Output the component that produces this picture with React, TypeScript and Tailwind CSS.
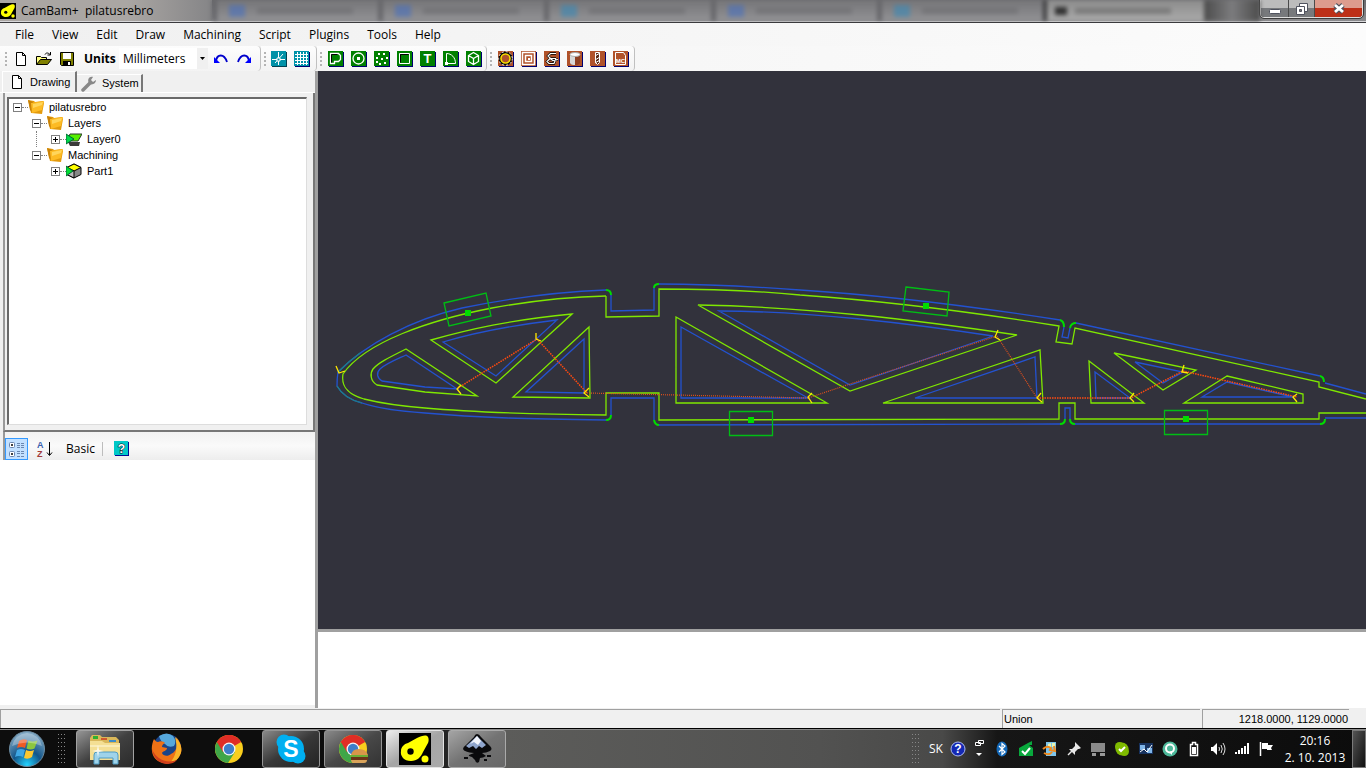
import React from "react";

type Kids = { children?: React.ReactNode };

const Grip = () => (
  <svg width="3" height="16" viewBox="0 0 3 16" className="shrink-0" aria-hidden="true">
    {[0, 4, 8, 12].map((y) => (
      <rect key={y} x="0" y={y + 1} width="2" height="2" fill="#b4b4b4" />
    ))}
  </svg>
);

function ToolButton({ label, children }: Kids & { label: string }) {
  return (
    <button type="button" aria-label={label} className="flex h-6 w-[23px] shrink-0 items-center justify-center">
      <svg width="16" height="16" viewBox="0 0 16 16">
        {children}
      </svg>
    </button>
  );
}

const Tile = ({ fill, edge, children }: Kids & { fill: string; edge: string }) => (
  <>
    <rect x="1" y="1" width="15" height="15" fill={edge} />
    <rect x="0" y="0" width="15" height="15" fill={fill} />
    {children}
  </>
);

const CamBamMark = () => (
  <>
    <rect width="32" height="32" fill="#000" />
    <path d="M28 3c2 1 2 5 1 7l-5 9c-2 5-6 9-12 9-7 0-11-5-10-10 0-4 3-7 7-8l9-5c4-2 8-3 10-2z" fill="#ff0" />
    <circle cx="11.500" cy="18.500" r="3.200" fill="#000" />
    <circle cx="26" cy="26" r="3.500" fill="#ff0" />
  </>
);

const PageShape = () => (
  <path d="M3.500 1.500h6l3 3v10h-9zM9.500 1.500v3h3" fill="#fff" stroke="#000" />
);

function TitleBar() {
  return (
    <header className="flex h-[23px] shrink-0 items-start overflow-hidden border-b border-[#3a3a3d] bg-linear-to-b from-[#6a6a6d] to-[#8d8d90] shadow-[inset_0_-1px_0_#d8d8da]">
      <div className="flex h-[21px] w-[212px] shrink-0 items-center bg-linear-to-r from-[#aaa6a3] from-60% to-[#858587]">
        <svg width="16" height="16" viewBox="0 0 32 32" className="mr-[5px] shrink-0">
          <CamBamMark />
        </svg>
        <h1 className="font-['Open_Sans','Noto_Sans',sans-serif] text-[12px] leading-[20px] whitespace-pre text-black">
          CamBam+  pilatusrebro
        </h1>
      </div>
      <div className="flex h-[21px] flex-1 overflow-hidden blur-[2px]" aria-hidden="true">
        {["#4a70bc", "#4a70bc", "#3a88b5", "#4a70bc", "#3a88b5"].map((c, i) => (
          <div key={i} className="flex min-w-0 flex-1 items-center gap-3 border-l-[5px] border-[#66666a] bg-linear-to-b from-[#757578] to-[#929295] pl-3">
            <span className="h-3 w-4 opacity-60" style={{ backgroundColor: c }} />
            <span className="h-[6px] w-24 bg-[#66666a] opacity-50" />
          </div>
        ))}
        <div className="flex min-w-0 flex-1 items-center gap-2 border-l-4 border-[#3c3c3e] bg-linear-to-b from-[#8c8c8c] to-[#aaaaaa] pl-2">
          <span className="h-2 w-3 bg-[#333]" />
          <span className="h-[6px] w-24 bg-[#666] opacity-60" />
        </div>
        <div className="w-14 bg-linear-to-r from-[#4c4c4c] via-[#7c7c7e] to-[#4c4c4c]" />
      </div>
      <div className="mr-[3px] flex h-[18px] shrink-0 overflow-hidden rounded-b-[4px] border border-t-0 border-[#dedede] bg-[#333] outline-1 outline-[#3c3c3c]">
        <button type="button" aria-label="Minimize" className="flex w-[28px] items-center justify-center border-r border-[#4a4a4a] bg-linear-to-b from-[#bcbcbc] from-50% to-[#77797c] to-50%">
          <svg width="12" height="12" viewBox="0 0 12 12"><rect x="0.500" y="6.500" width="11" height="4" rx="1" fill="#fff" stroke="#50535f" /></svg>
        </button>
        <button type="button" aria-label="Restore" className="flex w-[26px] items-center justify-center border-r border-[#4a4a4a] bg-linear-to-b from-[#bcbcbc] from-50% to-[#77797c] to-50%">
          <svg width="12" height="12" viewBox="0 0 12 12" stroke="#50535f" fill="#fff"><path d="M3.500.5h8v8h-8z" /><path d="M.5 3.500h8v8h-8z" /><path d="M3.500 6.500h2v2h-2z" fill="#777" /></svg>
        </button>
        <button type="button" aria-label="Close" className="flex w-[47px] items-center justify-center bg-linear-to-b from-[#dd9c8e] from-50% to-[#bd3018] to-50%">
          <svg width="12" height="11" viewBox="0 0 12 11"><path d="M2 2l8 7M10 2l-8 7" stroke="#50535f" strokeWidth="5" /><path d="M2 2l8 7M10 2l-8 7" stroke="#fff" strokeWidth="2.800" /></svg>
        </button>
      </div>
    </header>
  );
}

function MenuBar() {
  return (
    <nav className="flex h-[23px] shrink-0 items-center bg-linear-to-r from-[#f0f0f0] to-[#fcfcfc] pl-[6px] font-['Open_Sans','Noto_Sans',sans-serif] text-[12px] text-black">
      {["File", "View", "Edit", "Draw", "Machining", "Script", "Plugins", "Tools", "Help"].map((m) => (
        <button key={m} type="button" className="px-[9px] leading-5">
          {m}
        </button>
      ))}
    </nav>
  );
}

const GREEN = "#008000";
const RUST = "#b0522a";

const Group = ({ children, className = "" }: Kids & { className?: string }) => (
  <div className={`flex h-[25px] shrink-0 items-center rounded-r-sm border-r border-[#c0c0c0] bg-linear-to-b from-[#fdfdfd] to-[#f3f3f3] ${className}`}>
    {children}
  </div>
);

function ToolBar() {
  return (
    <div className="flex h-[25px] shrink-0 items-center bg-linear-to-r from-[#f2f2f2] to-[#fcfcfc]">
      <Group className="w-[261px] pl-[5px]">
        <Grip />
        <span className="w-[1px]" />
        <ToolButton label="New"><PageShape /></ToolButton>
        <ToolButton label="Open">
          <path d="M.5 13.500v-8h4l1 1h5v2" fill="#ffff80" stroke="#000" />
          <path d="M.5 13.500l4-5h11l-4 5z" fill="#808000" stroke="#000" />
          <path d="M9 3.500c1-2 3-2 5 0M14.500 1v3h-3" fill="none" stroke="#000" />
        </ToolButton>
        <ToolButton label="Save">
          <path d="M1.500 1.500h13v13h-12l-1-1z" fill="#808000" stroke="#000" />
          <path d="M4 2h8v6H4z" fill="#fff" /><path d="M4 10h8v5H4z" fill="#000" /><path d="M9 11h2v3H9z" fill="#fff" />
        </ToolButton>
        <label htmlFor="units" className="ml-[6px] w-[35px] font-['Open_Sans','Noto_Sans',sans-serif] text-[12px] font-bold whitespace-nowrap">
          Units
        </label>
        <span className="relative flex h-[21px] w-[89px] shrink-0 items-center bg-white">
          <select id="units" className="h-full w-full appearance-none bg-transparent pl-1 font-['Open_Sans','Noto_Sans',sans-serif] text-[12px] text-black">
            <option>Millimeters</option>
            <option>Inches</option>
          </select>
          <span className="pointer-events-none absolute top-0 right-0 flex h-full w-[11px] items-center justify-center bg-[#f0f0f0]">
            <svg width="5" height="3" viewBox="0 0 5 3"><path d="M0 0h5L2.500 3z" /></svg>
          </span>
        </span>
        <span className="w-[1px]" />
        <ToolButton label="Undo">
          <path d="M3 10C4 3 11 2 14 11" fill="none" stroke="#00c" strokeWidth="1.800" /><path d="M1 6v6h6z" fill="#00f" />
        </ToolButton>
        <ToolButton label="Redo">
          <path d="M13 10C12 3 5 2 2 11" fill="none" stroke="#00c" strokeWidth="1.800" /><path d="M15 6v6H9z" fill="#00f" />
        </ToolButton>
      </Group>
      <Group className="w-[56px] pl-[3px]">
        <Grip />
        <ToolButton label="Snap to points">
          <Tile fill="#0092a8" edge="#004050">
            <path d="M7.500 1v13M1 8.500h13M4 12l8-9" stroke="#fff" fill="none" />
            <path d="M6 7h3v3H6z" fill="#0092a8" stroke="#fff" />
          </Tile>
        </ToolButton>
        <ToolButton label="Snap to grid">
          <Tile fill="#0092a8" edge="#000070">
            <path d="M3.500 1v13M6.500 1v13M9.500 1v13M12.500 1v13M1 3.500h13M1 6.500h13M1 9.500h13M1 12.500h13" stroke="#fff" />
          </Tile>
        </ToolButton>
      </Group>
      <Group className="w-[170px] pl-[3px]">
        <Grip />
        <span className="w-[1px]" />
        <ToolButton label="Polyline">
          <Tile fill={GREEN} edge="#000070">
            <path d="M2.500 12.500v-10h8l2 2v4l-2 2h-4v2z" stroke="#fff" strokeWidth="1.300" fill="none" />
            <path d="M3.500 11.500v-8h6" stroke="#000" fill="none" />
          </Tile>
        </ToolButton>
        <ToolButton label="Circle">
          <Tile fill={GREEN} edge="#000070"><circle cx="7.500" cy="7.500" r="5.500" stroke="#fff" fill="none" strokeWidth="1.300" /><rect x="6" y="6" width="3" height="3" fill="#fff" /></Tile>
        </ToolButton>
        <ToolButton label="Point list">
          <Tile fill={GREEN} edge="#000070">
            {[[4, 2], [9, 2], [12, 6], [2, 6], [7, 7], [2, 10], [5, 12], [10, 11]].map(([x, y]) => (
              <rect key={`${x}-${y}`} x={x} y={y} width="2" height="2" fill="#fff" />
            ))}
          </Tile>
        </ToolButton>
        <ToolButton label="Rectangle">
          <Tile fill={GREEN} edge="#000070"><path d="M2.500 2.500h10v10h-10z" stroke="#fff" fill="none" /><path d="M3.500 11.500v-8h8" stroke="#000" fill="none" /></Tile>
        </ToolButton>
        <ToolButton label="Text">
          <Tile fill={GREEN} edge="#000070">
            <text x="7.500" y="12" textAnchor="middle" fontFamily="Liberation Sans, sans-serif" fontWeight="bold" fontSize="13" fill="#fff">T</text>
          </Tile>
        </ToolButton>
        <ToolButton label="Arc">
          <Tile fill={GREEN} edge="#000070"><path d="M3.500 12.500v-10c5 0 9 4 9 10z" stroke="#fff" fill="none" /><path d="M2 11h3v3H2z" fill="#fff" /></Tile>
        </ToolButton>
        <ToolButton label="Surface">
          <Tile fill={GREEN} edge="#000070"><path d="M7.500 1.500l5 3v6l-5 3-5-3v-6zM2.500 4.500l5 3 5-3M7.500 7.500v6" stroke="#fff" fill="none" strokeWidth="1.300" /></Tile>
        </ToolButton>
      </Group>
      <Group className="w-[148px] pl-[3px]">
        <Grip />
        <span className="w-[1px]" />
        <ToolButton label="Profile">
          <Tile fill={RUST} edge="#000070">
            <circle cx="7.500" cy="7.500" r="5.500" stroke="#000" strokeWidth="3" fill="none" />
            <circle cx="7.500" cy="7.500" r="6.800" stroke="#fff" strokeDasharray="2 2" fill="none" />
            <circle cx="7.500" cy="7.500" r="4.500" stroke="#ffe000" fill="none" strokeWidth="1.600" />
          </Tile>
        </ToolButton>
        <ToolButton label="Pocket">
          <Tile fill={RUST} edge="#000070"><path d="M1.500 1.500h12v12h-12zM4.500 4.500h6v6h-6z" stroke="#fff" strokeWidth="1.500" fill="none" /><path d="M7 7h2v2H7z" fill="#fff" /></Tile>
        </ToolButton>
        <ToolButton label="Engrave">
          <Tile fill={RUST} edge="#000070"><path d="M12 2.500H6.500L4 5l2.500 2.500H12M12 7.500l-2 5H5l-2-2 3-3 3 2 5-1" stroke="#000" strokeWidth="2.400" fill="none" /><path d="M12 2.500H6.500L4 5l2.500 2.500H12M12 7.500l-2 5H5l-2-2 3-3 3 2 5-1" stroke="#fff" strokeWidth="1.200" fill="none" /></Tile>
        </ToolButton>
        <ToolButton label="3D profile">
          <Tile fill={RUST} edge="#000070"><path d="M3 4v8c1 3 8 3 10 0V4z" fill="#8f4022" /><path d="M3 4v8c1 2 3 2 5 2V4z" fill="#d8d8d8" /><ellipse cx="8" cy="3.500" rx="5" ry="2" fill="#fff" stroke="#aaa" /></Tile>
        </ToolButton>
        <ToolButton label="Drill">
          <Tile fill={RUST} edge="#000070"><path d="M5.500 1.500h4v10l-2 2-2-2z" fill="#5a2b17" stroke="#fff" /><path d="M5 5l5-3M5 9l5-3M5 12l5-3" stroke="#fff" /></Tile>
        </ToolButton>
        <ToolButton label="Machine code">
          <Tile fill={RUST} edge="#000070">
            <path d="M2.500 1.500h8l2 3v9h-10z" fill="none" stroke="#fff" />
            <text x="7.500" y="12" textAnchor="middle" fontFamily="Liberation Sans, sans-serif" fontWeight="bold" fontSize="6" fill="#fff">MC</text>
          </Tile>
        </ToolButton>
      </Group>
    </div>
  );
}

const Folder = () => (
  <>
    <path d="M0 1l6 1 1 1 8-1 1 2-2 11-11-1z" fill="#e39a0c" />
    <path d="M0 1l5 2v11l-3-3z" fill="#c98206" />
    <path d="M3 4l13-2-2 9-10 3z" fill="#fdbb24" />
    <path d="M5 5l10-2-1 3-9 3z" fill="#ffd65c" />
  </>
);
const LayerShape = () => (
  <>
    <path d="M2 11h12l-1 4H4z" fill="#3a3a3a" />
    <path d="M1 10l3-7h12l-4 7z" fill="#55f000" stroke="#2a3a2a" />
    <path d="M0 3l8 5-8 5z" fill="#00d848" stroke="#063" />
  </>
);
const PartShape = () => (
  <>
    <path d="M8 1l7 3.500v7L8 15l-7-3.500v-7z" fill="#888" stroke="#000" />
    <path d="M8 1l7 3.500L8 8 1 4.500z" fill="#ff0" stroke="#000" />
    <path d="M8 8v7l-7-3.500v-7z" fill="#bbb" stroke="#000" />
    <path d="M0 3l7 5-7 5z" fill="#0d3" stroke="#063" />
  </>
);

function TreeRow({ text, open, icon, depth }: { text: string; open: boolean; icon: React.ReactNode; depth: string }) {
  return (
    <div className={`flex h-4 items-center ${depth}`}>
      <button type="button" aria-label={`Toggle ${text}`} className="h-[9px] w-[9px] shrink-0">
        <svg width="9" height="9" viewBox="0 0 9 9">
          <rect x=".5" y=".5" width="8" height="8" fill="#fff" stroke="#808080" />
          <path d={open ? "M2 4.500h5" : "M2 4.500h5M4.500 2v5"} stroke="#000" />
        </svg>
      </button>
      <span className="w-[6px] border-b border-dotted border-[#808080]" />
      <svg width="16" height="16" viewBox="0 0 16 16" className="mr-[5px] shrink-0">{icon}</svg>
      <span>{text}</span>
    </div>
  );
}

function LeftPanel() {
  return (
    <aside className="flex w-[315px] shrink-0 flex-col bg-[#f0f0f0] font-['Liberation_Sans',Arial,sans-serif] text-[11px] text-black">
      <div className="flex h-[22px] shrink-0 items-end border-b border-white pl-[2px]" role="tablist">
        <button role="tab" aria-selected="true" type="button" className="flex h-[21px] w-[75px] items-center border-t border-r-2 border-l border-t-white border-r-[#777] border-l-white pl-[6px]">
          <svg width="16" height="16" viewBox="0 0 16 16" className="mr-[5px] shrink-0"><PageShape /></svg>
          Drawing
        </button>
        <button role="tab" aria-selected="false" type="button" className="flex h-[18px] w-[66px] items-center border-t border-r-2 border-t-white border-r-[#777] pl-1">
          <svg width="16" height="16" viewBox="0 0 16 16" className="mr-[5px] shrink-0">
            <path d="M2 14l7-7" stroke="#888" strokeWidth="3.500" strokeLinecap="round" />
            <path d="M15 4l-3 2-2-2 2-3C8 0 6 4 8 7s7 1 7-3z" fill="#888" />
          </svg>
          System
        </button>
      </div>
      <div className="flex h-[339px] shrink-0 flex-col pl-[3px]">
        <div className="flex flex-1 flex-col border-r-2 border-b-2 border-l-2 border-r-[#777] border-b-[#777] border-l-[#999] pt-1 pr-[6px] pb-[5px] pl-[2px]">
          <div className="flex-1 border-t-2 border-r border-b border-l-2 border-t-[#696969] border-r-[#ddd] border-b-[#ddd] border-l-[#696969] bg-white">
            <TreeRow depth="pl-[4px]" text="pilatusrebro" open icon={<Folder />} />
            <TreeRow depth="pl-[23px]" text="Layers" open icon={<Folder />} />
            <TreeRow depth="ml-[27px] border-l border-dotted border-[#808080] pl-[14px]" text="Layer0" open={false} icon={<LayerShape />} />
            <TreeRow depth="pl-[23px]" text="Machining" open icon={<Folder />} />
            <TreeRow depth="pl-[42px]" text="Part1" open={false} icon={<PartShape />} />
          </div>
        </div>
      </div>
      <div className="flex h-7 shrink-0 pl-[3px]">
        <div className="flex flex-1 items-center border-l-2 border-[#999] bg-linear-to-b from-[#f2f2f2] via-[#fafafa] to-[#ededed] pt-[5px]">
          <button type="button" aria-label="Categorized" className="flex h-[22px] w-[23px] items-center justify-center border border-[#3399ff] bg-[#c2e0ff]">
            <svg width="18" height="18" viewBox="0 0 18 18" stroke="#6b87b0" fill="none">
              <rect x="1.500" y="2.500" width="5" height="5" rx="1" fill="#fff" /><rect x="1.500" y="11.500" width="5" height="5" rx="1" fill="#fff" />
              <path d="M3 5h2M4 4v2M3 14h2M4 13v2" stroke="#000" />
              <path d="M9 3.500h3M13 3.500h3M9 5.500h3M13 5.500h3M9 7.500h3M13 7.500h3M9 11.500h3M13 11.500h3M9 13.500h3M13 13.500h3M9 16.500h3M13 16.500h3" />
            </svg>
          </button>
          <button type="button" aria-label="Alphabetical" className="ml-2 flex h-[22px] w-[18px] items-center">
            <svg width="18" height="18" viewBox="0 0 18 18">
              <text x="1" y="8" fontFamily="Liberation Sans, sans-serif" fontWeight="bold" fontSize="9" fill="#3a5fae">A</text>
              <text x="1" y="17" fontFamily="Liberation Sans, sans-serif" fontWeight="bold" fontSize="9" fill="#a03a3a">Z</text>
              <path d="M13.500 2v13M11 12.500l2.500 3 2.500-3" stroke="#000" fill="none" />
            </svg>
          </button>
          <button type="button" className="ml-3 font-['Open_Sans','Noto_Sans',sans-serif] text-[12px]">Basic</button>
          <span className="ml-[7px] h-[14px] w-px bg-[#bdbdbd]" />
          <button type="button" aria-label="Help" className="ml-[11px]">
            <svg width="15" height="15" viewBox="0 0 16 16">
              <Tile fill="#00c8c8" edge="#000090">
                <text x="8" y="13" textAnchor="middle" fontFamily="Liberation Sans, sans-serif" fontWeight="bold" fontSize="13" fill="#fff" stroke="#000" paintOrder="stroke">?</text>
              </Tile>
            </svg>
          </button>
        </div>
      </div>
      <div className="mb-1 flex-1 bg-white" />
    </aside>
  );
}

const profile = [
  "M606 296V317L659 316V289C710 289 760 291 800 295C870 300 960 310 1059 326L1056 342L1072 344L1075 328L1319 382V387L1366 399",
  "M606 296C560 297 525 302 492 308C430 320 365 342 343 374C341 386 347 394 364 399C380 403 400 406 425 408C470 412 520 414 606 415V393H659V420L1059 419V403H1075V419H1319V413H1366",
];
const pockets = [
  "M406 349L477 396L425 392L377 385C370 381 370 373 373 369C378 363 388 358 406 349Z",
  "M431 340C470 329 510 320 572 314L496 383Z",
  "M589 327L590 398L513 397Z",
  "M676 317L827 403H676Z",
  "M698 305C760 306 810 310 860 315Q930 322 1017 335L850 391Z",
  "M883 403L1040 350L1043 403Z",
  "M1089 361L1144 403H1091Z",
  "M1114 353L1196 370L1163 390Z",
  "M1227 376L1303 394V403H1184Z",
];
const toolpaths = [
  "M606 290C555 292 510 298 462 308C410 320 365 345 338 372C337 378 337 381 337 386C342 395 350 400 362 403C380 409 400 411 425 413C480 418 530 419 606 420",
  "M611 295V311L654 310V288M659 284C720 284 760 287 800 290C880 295 970 306 1060 320M1064 327L1062 337L1068 338L1070 328M1076 323L1320 376M1325 383L1366 394",
  "M611 415V398H654V420M659 425L1060 424M1065 419V408H1070V419M1075 424H1320M1325 418H1366",
  "M406 355L457 389L425 387L382 381C377 378 376 373 380 369C385 364 395 360 406 355Z",
  "M443 342Q490 328 557 320L496 376Z",
  "M584 339V393L526 392Z",
  "M681 327L808 398H681Z",
  "M719 311C770 311 820 315 860 319Q920 325 993 336L850 385Z",
  "M915 398L1035 357L1037 398Z",
  "M1095 372L1130 398H1096Z",
  "M1135 362L1183 372L1163 383Z",
  "M1227 382L1293 397H1202Z",
];

function Viewport() {
  return (
    <div className="min-h-0 flex-1 overflow-hidden bg-[#32323c]">
      <svg viewBox="318 71 1048 558" preserveAspectRatio="xMinYMin slice" className="block h-full w-full" fill="none" role="img" aria-label="Wing rib drawing">
        <g stroke="#2352d0" strokeWidth="1.300">{toolpaths.map((d) => <path key={d} d={d} />)}</g>
        <path d="M337 386C342 395 350 400 362 403M338 372C345 365 352 359 360 353" stroke="#1c7f86" strokeWidth="1.200" />
        <g stroke="#7fe800" strokeWidth="1.300">
          {profile.map((d) => <path key={d} d={d} />)}
          {pockets.map((d) => <path key={d} d={d} />)}
        </g>
        <path
          d="M458 388L537 339L587 393M1037 398H1131L1183 371L1297 397"
          stroke="#ff4a10" strokeWidth="1.500" strokeDasharray="1.500 1"
        />
        <path d="M587 393L808 398L850 384L997 336L1037 398" stroke="#e0501c" strokeWidth="1.200" strokeDasharray="1 1" />
        <path
          d="M606 290Q611 290 611 295M654 288Q654 284 659 284M606 420Q611 420 611 415M654 420Q655 425 659 425M1060 320Q1064 321 1064 327M1070 328Q1071 323 1076 323M1320 376Q1324 377 1324 382M1060 424Q1065 424 1065 419M1070 419Q1070 424 1075 424M1320 424Q1325 424 1325 419"
          stroke="#00dc00" strokeWidth="2"
        />
        <g stroke="#00be14" strokeWidth="1.300">
          <path d="M444 303L486 293L491 316L449 326Z" />
          <path d="M906 287L949 292L947 316L903 311Z" />
          <path d="M729.500 411.500H772.500V435.500H729.500Z" />
          <path d="M1164.500 410.500H1207.500V434.500H1164.500Z" />
        </g>
        {[[468, 313], [926, 306], [751, 420], [1186, 419]].map(([x, y]) => (
          <rect key={x} x={x - 3} y={y - 3} width="6" height="6" fill="#00dc00" />
        ))}
        <path
          d="M336 366L339 373L345 371M536 333V339L541 341M461 385L457 389L461 394M589 388L584 393L589 397M812 393L808 397L812 403M998 330L995 337L1000 340M1041 393L1037 398L1042 402M1134 393L1130 398L1134 402M1184 365L1182 372L1188 373M1297 394L1293 397L1297 402"
          stroke="#ffe800" strokeWidth="1.300"
        />
      </svg>
    </div>
  );
}

function StatusBar() {
  return (
    <footer className="flex h-[19px] shrink-0 items-stretch bg-[#f0f0f0] pr-[17px] font-['Liberation_Sans',Arial,sans-serif] text-[11px] leading-[18px] text-black">
      <div className="mr-[2px] flex-1 border-t border-l border-[#a0a0a0]" />
      <div className="mr-[2px] w-[198px] border-t border-l border-[#a0a0a0] pl-[1px]">Union</div>
      <div className="w-[147px] border-t border-l border-[#a0a0a0] pr-[1px] text-right">1218.0000, 1129.0000</div>
    </footer>
  );
}

const DotGrip = () => (
  <svg width="9" height="32" viewBox="0 0 9 32" className="shrink-0" aria-hidden="true">
    {[1, 5, 9, 13, 17, 21, 25, 29].map((y) => [0, 3, 6].map((x) => <rect key={`${x}.${y}`} x={x + 1} y={y} width="1" height="1" fill="#868686" />))}
  </svg>
);

const chromeParts = (
  <>
    <circle cx="16" cy="16" r="14" fill="#f9ce1d" />
    <path d="M16 16L3.900 9A14 14 0 0 1 28.100 9z" fill="#e02d25" />
    <path d="M3.900 9A14 14 0 0 0 15 30l7-11-6-3z" fill="#3fa648" />
    <path d="M16 9h12.100A14 14 0 0 0 3.900 9l6 10z" fill="#e02d25" />
    <circle cx="16" cy="16" r="6.500" fill="#f5f5f5" /><circle cx="16" cy="16" r="5.200" fill="#3f7ec9" />
  </>
);

const apps: { name: string; look: string; icon: React.ReactNode }[] = [
  {
    name: "Explorer",
    look: "border-[#a2a2a2] bg-linear-to-br from-[#969696] via-[#404040] to-[#2b2b2b]",
    icon: (
      <>
        <path d="M1 5l2-3h8l2 2h14l3 3v20H1z" fill="#d9b75a" />
        <path d="M4 3h5v3H4z" fill="#30b030" /><path d="M12 5h6v2h-6z" fill="#d0592d" /><path d="M20 7h7v2h-7z" fill="#3e8cc8" />
        <path d="M1 8h12l3 2h15v17H1z" fill="#f4df94" /><path d="M1 12h30v2H1z" fill="#f9ecb8" />
        <path d="M5 31V22q0-3 3-3h18q3 0 3 3v9h-5v-6H10v6z" fill="#9fd3ea" stroke="#4e9cc4" />
        <path d="M9 12l1 5 5 1-5 1-1 5-1-5-5-1 5-1z" fill="#fff" opacity=".8" />
      </>
    ),
  },
  {
    name: "Firefox",
    look: "border-transparent",
    icon: (
      <>
        <circle cx="16" cy="15" r="14" fill="#1b4488" />
        <path d="M8 3q8-5 14 0 4 5 1 10-6 2-9-2-5-3-6-8z" fill="#56a8dc" />
        <path d="M3 6c1 1 2 3 4 3 2-1 4-1 6 0l1 1c-2 1-3 2-3 4l5 1c0 3-4 3-5 5 1 3 6 4 9 1 5-2 8-9 5-17 5 5 7 13 4 18-4 8-14 11-22 6C-1 23 0 12 3 6z" fill="#ee7116" />
        <path d="M24 4c6 5 8 13 5 18-2 5-6 7-10 8 6-7 8-15 5-26z" fill="#fbb52a" />
        <path d="M1 16c1 8 6 14 14 15 5 0 8-1 11-4C15 31 5 26 1 16z" fill="#d0401c" />
      </>
    ),
  },
  { name: "Chrome", look: "border-transparent", icon: chromeParts },
  {
    name: "Skype",
    look: "border-[#949494] bg-linear-to-br from-[#8a8a8a] via-[#383838] to-[#242424]",
    icon: (
      <>
        <circle cx="16" cy="16" r="13" fill="#00aff0" /><circle cx="9" cy="9" r="7.500" fill="#00aff0" /><circle cx="23" cy="23" r="7.500" fill="#00aff0" />
        <text x="16" y="24" textAnchor="middle" fontFamily="Liberation Sans, sans-serif" fontWeight="bold" fontSize="23" fill="#fff">S</text>
      </>
    ),
  },
  {
    name: "Chrome app",
    look: "border-[#949494] bg-linear-to-br from-[#8a8a8a] via-[#484848] to-[#333]",
    icon: (
      <>
        {chromeParts}
        <path d="M14 22q1-6 8-6t9 6z" fill="#d9964a" /><path d="M13 22h18v2H13z" fill="#6cae35" /><path d="M14 24h17v3H14z" fill="#6b3518" /><path d="M14 27h16q0 3-3 3H17q-3 0-3-3z" fill="#d9a35a" />
      </>
    ),
  },
  { name: "CamBam", look: "border-[#e4e4e4] bg-linear-to-br from-[#ededed] via-[#a5a5a5] to-[#aaa]", icon: <CamBamMark /> },
  {
    name: "Inkscape",
    look: "border-[#aaa] bg-linear-to-br from-[#a5a5a5] via-[#737373] to-[#686868]",
    icon: (
      <>
        <path d="M16 1q2 0 4 3l9 9q3 3 0 5-4 2-8 2l4 3q-3 2-6 2l-1 4q-3 2-4-2l-3-3q-4-1-3-2l5-2Q3 19 2 16q0-2 3-4l8-8q1-3 3-3z" fill="#0a0a0c" />
        <path d="M16 3l9 9-4 3-3-2-3 3-3-3-4 2-3-2z" fill="#8fa5cc" /><path d="M16 3l4 5-3 4-4-3-4 2z" fill="#f2f5fb" />
        <path d="M3 24h4v2H3zM26 22h4v2h-4zM23 26h3v2h-3z" fill="#0a0a0c" />
      </>
    ),
  },
];

const tray: { name: string; icon: React.ReactNode }[] = [
  { name: "Bluetooth", icon: <><ellipse cx="8" cy="8" rx="5.500" ry="7.500" fill="#1268b8" /><path d="M5 5l6 6-3 2.500v-11L11 5l-6 6" stroke="#fff" fill="none" strokeWidth="1.200" /></> },
  { name: "Safely remove", icon: <><path d="M1 7l9-5 4-2v4h-3l4 3v8H1z" fill="#08a83c" /><path d="M4 10l3 3 5-6" stroke="#fff" strokeWidth="2" fill="none" /></> },
  { name: "Updates", icon: <><path d="M4 1h10v14H4z" fill="#7ec4ea" /><path d="M6 3l3-1v4H6zM10 2h3v4h-3z" fill="#e9f5b0" /><path d="M1 8q4-4 8-1l-1 2 5 1-1-5M2 12q5 3 8-1" stroke="#f08a1d" strokeWidth="2" fill="none" /></> },
  { name: "Pin", icon: <><path d="M9 1l6 6-2 1-1 0-3 3v3L3 8h3l3-3z" fill="#e8e8e8" /><path d="M6 10l-4 4" stroke="#e8e8e8" strokeWidth="1.500" /></> },
  { name: "Display", icon: <><path d="M1 2h14v9H1z" fill="#8a8a8a" /><path d="M2 12h4v3H2zM10 12h5v3h-5z" fill="#999" /></> },
  { name: "Sync", icon: <><circle cx="5.500" cy="5.500" r="4.500" fill="#7fba00" /><circle cx="10.500" cy="10.500" r="4.500" fill="#7fba00" /><circle cx="8" cy="8" r="6.500" fill="#7fba00" /><path d="M5 8l2 2 4-4" stroke="#fff" strokeWidth="2" fill="none" /></> },
  { name: "Network monitor", icon: <><path d="M1 2h14v11H1z" fill="#17325e" /><path d="M2 4h5v5H2zM9 7h5v5H9z" fill="#7fb5e8" /><path d="M2 11l4-3 3 3 5-7" stroke="#fff" fill="none" /></> },
  { name: "Backup", icon: <><circle cx="8" cy="8" r="7.500" fill="#4db89a" /><circle cx="8" cy="7.500" r="4" fill="none" stroke="#fff" strokeWidth="2" /><path d="M7 11l3 3v-4z" fill="#fff" /></> },
  { name: "Battery", icon: <><path d="M4.500 3.500h2v-2h3v2h2v11h-7z" fill="none" stroke="#fff" strokeWidth="1.500" /><path d="M6 6h4v7H6z" fill="#fff" /></> },
  { name: "Volume", icon: <><path d="M1 6h2l4-4v12l-4-4H1z" fill="#fff" /><path d="M9 6q1 2 0 4M11 4q2.500 4 0 8M13 2q4 6 0 12" stroke="#ddd" fill="none" /></> },
  { name: "Signal", icon: <path d="M1 11h2v2H1zM4 9h2v4H4zM7 7h2v6H7zM10 5h2v8h-2zM13 2h2v11h-2z" fill="#fff" /> },
  { name: "Action center", icon: <><path d="M2.500 1v14" stroke="#fff" strokeWidth="1.500" /><path d="M4 2h6v2h5l-2 3 1 2h-5V8H4z" fill="#fff" /></> },
];

function TaskBar() {
  return (
    <div className="flex h-10 shrink-0 items-center border-t border-black bg-[linear-gradient(to_right,#0d0d0d_24%,#1c1c1c_32%,#5c5c5a_37%,#525251_60%,#494948_69%,#161616_73%,#0c0c0c_100%)] font-['Open_Sans','Noto_Sans',sans-serif] text-[12px] text-white shadow-[inset_0_1px_0_#8a8a8a]">
      <button type="button" aria-label="Start" className="ml-[9px] shrink-0">
        <svg width="36" height="36" viewBox="0 0 36 36">
          <defs>
            <radialGradient id="orb" cx=".5" cy=".95" r=".9">
              <stop offset="0" stopColor="#22d3ff" /><stop offset=".45" stopColor="#12558a" /><stop offset="1" stopColor="#7fa8c4" />
            </radialGradient>
          </defs>
          <circle cx="18" cy="18" r="17.500" fill="url(#orb)" stroke="#6c8ba0" />
          <path d="M10 10q4-3 8-1l-2 8q-4-2-8 0z" fill="#ee5a24" /><path d="M19.500 9.500q4 2 9 0l-3 8q-4 2-8 0z" fill="#8cc63e" />
          <path d="M8 19q4-2 8 0l-2 7q-4-2-8 0z" fill="#3fa7e4" /><path d="M17 19q4 2 8 0l-2 7q-4 3-8 1z" fill="#fdc82f" />
          <path d="M3 15Q6 3 18 2q12 1 15 13-15-7-30 0z" fill="#fff" opacity=".3" />
        </svg>
      </button>
      <span className="w-[12px]" />
      <DotGrip />
      <div className="ml-[10px] flex gap-1">
        {apps.map((a) => (
          <button key={a.name} type="button" aria-label={a.name} className={`flex h-[38px] w-[58px] items-center justify-center rounded-[3px] border ${a.look}`}>
            <svg width="32" height="32" viewBox="0 0 32 32">{a.icon}</svg>
          </button>
        ))}
      </div>
      <span className="flex-1" />
      <DotGrip />
      <span className="ml-[9px] w-[21px] leading-4">SK</span>
      <button type="button" aria-label="Language help">
        <svg width="16" height="16" viewBox="0 0 16 16">
          <circle cx="8" cy="8" r="7" fill="#1428b4" stroke="#aab8ee" />
          <text x="8" y="12" textAnchor="middle" fontFamily="Liberation Sans, sans-serif" fontWeight="bold" fontSize="12" fill="#fff">?</text>
        </svg>
      </button>
      <button type="button" aria-label="Language bar options" className="ml-2">
        <svg width="12" height="20" viewBox="0 0 12 20"><path d="M4.500 1.500h5v3h-5zM1.500 3.500h5v3h-5z" stroke="#fff" fill="#222" /><path d="M2 14h6l-3 3z" fill="#fff" /></svg>
      </button>
      <div className="ml-[4px] flex">
        {tray.map((t) => (
          <button key={t.name} type="button" aria-label={t.name} className="flex w-6 justify-center">
            <svg width="16" height="16" viewBox="0 0 16 16">{t.icon}</svg>
          </button>
        ))}
      </div>
      <time className="w-[74px] text-center leading-[17px]">
        20:16
        <br />
        2. 10. 2013
      </time>
      <button type="button" aria-label="Show desktop" className="h-[38px] w-[14px] border border-[#7a7a7a] bg-linear-to-br from-[#555] to-[#111]" />
    </div>
  );
}

export default function App() {
  return (
    <div className="flex h-screen flex-col overflow-hidden bg-[#f0f0f0]">
      <TitleBar />
      <MenuBar />
      <ToolBar />
      <main className="flex min-h-0 flex-1">
        <LeftPanel />
        <div className="mb-px w-[3px] shrink-0 bg-[#a0a0a0]" />
        <section className="flex min-w-0 flex-1 flex-col">
          <Viewport />
          <div className="h-[3px] shrink-0 bg-[#a0a0a0]" />
          <div className="mb-px h-[76px] shrink-0 bg-white" aria-label="Log" />
        </section>
      </main>
      <StatusBar />
      <TaskBar />
    </div>
  );
}
